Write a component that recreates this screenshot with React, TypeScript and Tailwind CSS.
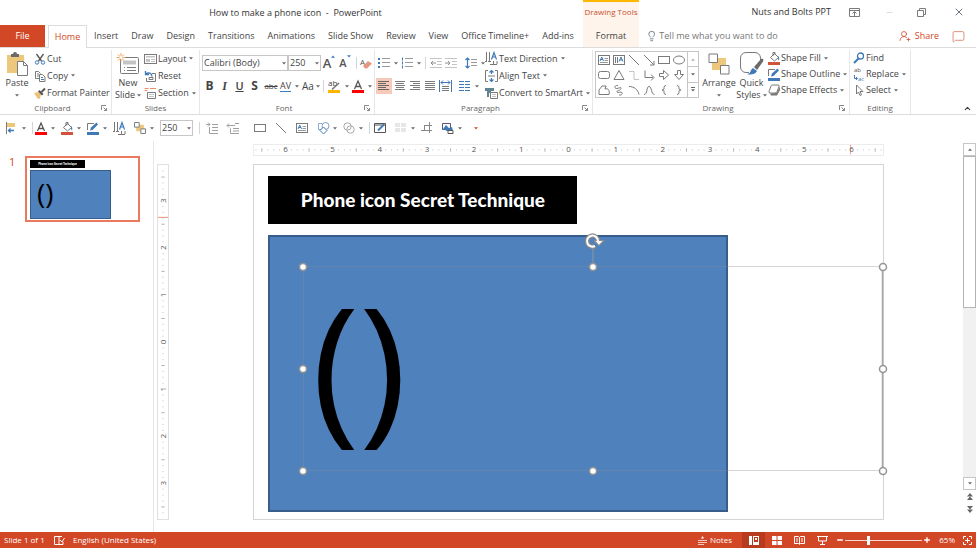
import type { ReactNode } from "react";
import { ChevronUp, Lightbulb, MessageSquare, Minus, Plus, UserRoundPlus, X } from "lucide-react";

const TABS = ["Insert", "Draw", "Design", "Transitions", "Animations", "Slide Show", "Review", "View", "Office Timeline+", "Add-ins"];

const GRAY = "#7a7a7a";
const BLUE = "#3f79b7";
const LIGHT = "#c4c4c4";

function Icon({ children, w = 12, h = 12 }: { children: ReactNode; w?: number; h?: number }) {
  return (
    <svg width={w} height={h} viewBox={`0 0 ${w} ${h}`} fill="none" stroke={GRAY} className="shrink-0 overflow-visible" aria-hidden="true">
      {children}
    </svg>
  );
}

function Caret({ color = "#666" }: { color?: string }) {
  return (
    <svg width="4" height="3" viewBox="0 0 4 3" className="shrink-0" aria-hidden="true">
      <path d="M0 .3h4L2 2.5z" fill={color} />
    </svg>
  );
}

/* ---------- icons ---------- */

const Lines = ({ rows, color = GRAY }: { rows: [number, number][]; color?: string }) => (
  <Icon>
    {rows.map(([a, b], i) => (
      <path key={i} d={`M${a} ${1.5 + i * 2}H${b}`} stroke={color} />
    ))}
  </Icon>
);

const PasteIcon = () => (
  <Icon w={22} h={24}>
    <path d="M1 3h17v18H1z" fill="#edc77c" stroke="none" />
    <path d="M5 5V2h2a2 2 0 0 1 4 0h2v3z" fill="#6a6a6a" stroke="none" />
    <path d="M11.500 9.500h6l4 4v10h-10z" fill="#fff" />
    <path d="M17.500 9.500v4h4" />
  </Icon>
);

const CutIcon = () => (
  <Icon>
    <path d="M2.500 1l5 7M9.500 1l-5 7" stroke="#555" strokeWidth="1.300" />
    <circle cx="3" cy="9.500" r="1.700" stroke={BLUE} />
    <circle cx="9" cy="9.500" r="1.700" stroke={BLUE} />
  </Icon>
);

const CopyIcon = () => (
  <Icon>
    <path d="M5 8.500H1.500v-7h3l2 2M3 4h2M3 6h2" />
    <path d="M5.500 4.500h3l2.500 2.500v4.500H5.500z" fill="#fff" />
    <path d="M7 7.500h2M7 9.500h3" stroke={BLUE} />
  </Icon>
);

const PainterIcon = () => (
  <Icon>
    <path d="M0 6l4.500-1 2.500 2-1 4.500-2 .5z" fill="#edc077" stroke="none" />
    <path d="M4 4.500l4 4 1.500-1.500-4-4z" fill="#555" stroke="none" />
    <path d="M7.500 5l3.500-3.500" stroke="#555" strokeWidth="2" />
  </Icon>
);

const NewSlideIcon = () => (
  <Icon w={24} h={22}>
    <rect x="4.500" y="4.500" width="18" height="16" rx="1" fill="#fff" />
    <path d="M7 7.500h13v4H7z" fill={LIGHT} stroke="none" />
    <path d="M8 14.500h1M11 14.500h9M8 17.500h1M11 17.500h9" />
    <path d="M5 0v9M.5 4.500h9M2 1.500l6 6M8 1.500l-6 6" stroke="#eda45f" />
    <circle cx="5" cy="4.500" r="1.500" fill="#fff" stroke="none" />
  </Icon>
);

const LayoutIcon = () => (
  <Icon w={13}>
    <rect x=".5" y="1.500" width="12" height="9" />
    <path d="M2 3h9v1.500H2zM2 6h4v3H2z" fill={LIGHT} stroke="none" />
    <path d="M7 6.500h4M7 8.500h4" stroke={LIGHT} />
  </Icon>
);

const ResetIcon = () => (
  <Icon w={13}>
    <path d="M8 3.500h3.500v8h-9V8M5 7.500h4v2H5z" />
    <path d="M1.500 1v3.500H5M2 4a3.500 3.500 0 0 1 6 2.500" stroke={BLUE} strokeWidth="1.300" />
  </Icon>
);

const SectionIcon = () => (
  <Icon w={13}>
    <path d="M.5 1.500h4M.5 3.500h3M6 1.500h6" stroke="#e8926c" />
    <path d="M3.500 5.500h8v6h-8z" />
    <path d="M5 7.500h5M5 9.500h5" stroke={LIGHT} />
  </Icon>
);

const EraserIcon = () => (
  <Icon>
    <text x="0" y="8" fontSize="8" fill="#555" stroke="none">A</text>
    <path d="M3 9l5-5 4 2.500-5 5H5z" fill="#e8987f" stroke="none" />
  </Icon>
);

const BulletsIcon = ({ numbered = false }: { numbered?: boolean }) => (
  <Icon>
    {[2, 6, 10].map((y) => (
      <g key={y}>
        {numbered ? (
          <path d={`M1.500 ${y - 1.500}v3`} stroke={BLUE} />
        ) : (
          <rect x="0" y={y - 1} width="2" height="2" fill={BLUE} stroke="none" />
        )}
        <path d={`M4 ${y - 0.5}h8`} stroke="#9a9a9a" />
      </g>
    ))}
  </Icon>
);

const IndentIcon = ({ out = false }: { out?: boolean }) => (
  <Icon>
    <path d="M0 1.500h12M7 4.500h5M7 7.500h5M0 10.500h12" stroke={LIGHT} />
    <path d={out ? "M6 6H1M3 4L1 6l2 2" : "M0 6h5M3 4l2 2-2 2"} stroke="#8e8e8e" />
  </Icon>
);

const SpacingIcon = () => (
  <Icon>
    <path d="M2.500 1v10M.5 3l2-2 2 2M.5 9l2 2 2-2" stroke={BLUE} strokeWidth="1.200" />
    <path d="M6 2.500h6M6 5.500h6M6 8.500h6" stroke="#9a9a9a" />
  </Icon>
);

const DistributeIcon = () => (
  <Icon w={13}>
    <path d="M.5 0v12M12.500 0v12M2 2.500h9M4 .5l-2 2 2 2M9 .5l2 2-2 2" stroke={BLUE} />
    <path d="M3 6.500h7M3 8.500h7M3 10.500h7" />
  </Icon>
);

const ColumnsIcon = () => (
  <Icon>
    <path d="M0 1.500h5M6 1.500h5M0 4.500h5M6 4.500h5M0 7.500h5M6 7.500h5M0 10.500h5M6 10.500h5" stroke={BLUE} />
  </Icon>
);

const TextDirIcon = () => (
  <Icon w={13} h={13}>
    <path d="M1.500 0v10M4.500 0v10M0 9.500h2M3 9.500h3M8.500 9v3M12 9v3M5 12.500h7" stroke="#777" />
    <path d="M6.500 7.500l2.500-7L11.500 7.500M7.500 5h3" stroke={BLUE} strokeWidth="1.200" />
  </Icon>
);

const AlignTextIcon = () => (
  <Icon w={13}>
    <path d="M3 .5H.5v11H3M10 .5h2.500v11H10M3 6h7" />
    <path d="M6.500 1v3M6.500 8v3M4.500 2.500l2-2 2 2M4.500 9.500l2 2 2-2" stroke={BLUE} strokeWidth="1.200" />
  </Icon>
);

const SmartArtIcon = () => (
  <Icon w={13}>
    <path d="M0 1h9v3H6v2H4v4H2V4H0z" fill="#5f8390" stroke="none" />
    <path d="M5.500 5.500h7v6h-7z" fill="#fff" />
    <path d="M7 7.500h4M7 9.500h4" stroke={LIGHT} />
  </Icon>
);

const ArrangeIcon = ({ small = false }: { small?: boolean }) => (
  <svg
    width={small ? 12 : 22}
    height={small ? 12 : 22}
    viewBox="0 0 22 22"
    fill="#fff"
    stroke={GRAY}
    strokeWidth={small ? 1.8 : 1}
    aria-hidden="true"
  >
    <path d="M9 5h9v8H9zM4 10h8v7H4z" fill="#edc77c" stroke="none" />
    <path d="M1 1h8.500v8.500H1zM12.500 12.500H21V21h-8.500z" />
  </svg>
);

const QuickStylesIcon = () => (
  <Icon w={24} h={24}>
    <path d="M9 20.500H6a5.500 5.500 0 0 1-5.500-5.500V6A5.500 5.500 0 0 1 6 .5h9A5.500 5.500 0 0 1 20.500 6v2" fill="#fff" />
    <path d="M14 15l7-8c3-1 2.500 1 2 2.500L17 18z" fill="#6a6a6a" stroke="none" />
    <path d="M7 22c4 0 3-4 6-6l4 3c-2 4-7 4-10 3z" fill={BLUE} stroke="none" />
  </Icon>
);

const FillIcon = () => (
  <Icon w={12} h={13}>
    <path d="M2.500 5.500l4-4 4 4-4 3.500zM5 4V.5h2V3" stroke="#777" />
    <path d="M10 4c1.500 1 1.500 3 1 4.500-1-.5-1-2-1-4.500z" fill={BLUE} stroke="none" />
    <path d="M0 10h12v3H0z" fill="#d0533a" stroke="none" />
  </Icon>
);

const OutlineIcon = () => (
  <Icon w={12} h={13}>
    <path d="M7 1.500H.5V8" />
    <path d="M3 8.500l1-3 5.500-5 1.500 2L5.500 8z" fill={BLUE} stroke="none" />
    <path d="M0 10h12v3H0z" fill={BLUE} stroke="none" />
  </Icon>
);

const EffectsIcon = () => (
  <Icon w={12} h={12}>
    <path d="M2 9.500l1 2h6l3-5.500V2.500L8.500 9z" fill="#777" stroke="none" />
    <path d="M4.500 1h5.500q1.500 0 1 1.500L9 7.500Q8.500 9 7 9H2Q.5 9 1 7.500L3 2q.3-1 1.500-1z" fill="#fff" />
  </Icon>
);

const FindIcon = () => (
  <Icon>
    <circle cx="7.500" cy="4" r="3" stroke={BLUE} strokeWidth="1.300" />
    <path d="M5.500 6.500L1 11" stroke={BLUE} strokeWidth="2" />
  </Icon>
);

const ReplaceIcon = () => (
  <Icon>
    <text x="1" y="4" fontSize="6" fill="#555" stroke="none">ab</text>
    <text x="5" y="13" fontSize="6" fill={BLUE} stroke="none">ac</text>
    <path d="M1.500 7v3.500H4M3 9l1.500 1.500L3 12" stroke={BLUE} />
  </Icon>
);

const SelectIcon = () => (
  <Icon>
    <path d="M3.500 1v9l2-2 1.500 3.500 1.500-.7L7 7.500h3z" />
  </Icon>
);

const FontColorIcon = ({ color = "#f00" }: { color?: string }) => (
  <Icon w={12} h={13}>
    <path d="M2.500 9L6 1l3.500 8M4 6.500h4" stroke="#555" strokeWidth="1.300" />
    <path d="M0 10h12v3H0z" fill={color} stroke="none" />
  </Icon>
);

const HighlightIcon = () => (
  <Icon w={13} h={13}>
    <text x="0" y="6" fontSize="8" fill="#444" stroke="none">ab</text>
    <path d="M4 9.500l7-6.500" stroke="#777" strokeWidth="1.600" />
    <path d="M0 10h12v3H0z" fill="#ffb400" stroke="none" />
  </Icon>
);

const RectIcon = () => (
  <Icon>
    <rect x=".5" y="2.500" width="11" height="7" />
  </Icon>
);

const LineIcon = ({ arrow = false }: { arrow?: boolean }) => (
  <Icon>
    <path d="M1 1l10 10" />
    {arrow && <path d="M11 7v4H7" />}
  </Icon>
);

const TextBoxIcon = ({ vertical = false }: { vertical?: boolean }) => (
  <Icon>
    <rect x=".5" y="1.500" width="11" height="9" />
    {vertical ? <path d="M2.500 3v6M4.500 3v6" /> : <path d="M6.500 4.500H10M6.500 6.500H10M2 8.500h8" stroke="#999" />}
    <path d={vertical ? "M6 7.500L8 3l2 4.500M7 6h2" : "M2 7l1.700-4L5.500 7M3 5.500h2"} stroke={BLUE} />
  </Icon>
);

const GALLERY: { name: string; icon: ReactNode }[] = [
  { name: "Text box", icon: <TextBoxIcon /> },
  { name: "Vertical text box", icon: <TextBoxIcon vertical /> },
  { name: "Line", icon: <LineIcon /> },
  { name: "Arrow", icon: <LineIcon arrow /> },
  { name: "Rectangle", icon: <RectIcon /> },
  { name: "Oval", icon: <Icon><ellipse cx="6" cy="6" rx="5.500" ry="4" /></Icon> },
  { name: "Rounded rectangle", icon: <Icon><rect x=".5" y="2.500" width="11" height="7" rx="2" /></Icon> },
  { name: "Triangle", icon: <Icon><path d="M6 1.500L11 10.500H1z" /></Icon> },
  { name: "Elbow", icon: <Icon><path d="M1 2.500h5v8h5" stroke={LIGHT} /></Icon> },
  { name: "Elbow arrow", icon: <Icon><path d="M2 1.500v7h8M8 5.500l3 3-3 3" /></Icon> },
  { name: "Right arrow", icon: <Icon><path d="M1.500 4.500h4v-3L10.500 6l-5 4.500v-3h-4z" /></Icon> },
  { name: "Down arrow", icon: <Icon><path d="M4.500 1.500h3v4h3L6 10.500 1.500 5.500h3z" /></Icon> },
  { name: "Freeform", icon: <Icon><path d="M1 10.500V6l3-4h4L7 5c3-1 5 1 4 5.500z" /></Icon> },
  { name: "Scribble", icon: <Icon><path d="M5 1.500C1 1 1 5 4 4.500s4-2 4 0-5 2-4 3.500 4-1 5 .5-1 3-3 2.500" /></Icon> },
  { name: "Arc", icon: <Icon><path d="M1 2.500c5 0 9 3 10 8" /></Icon> },
  { name: "Curve", icon: <Icon><path d="M1 10.500c4 0 2-8 5-8s2 8 5.500 8" /></Icon> },
  { name: "Left brace", icon: <Icon><path d="M8 1.500q-2 0-2 2V5q0 1-2 1 2 0 2 1v1.500q0 2 2 2" /></Icon> },
  { name: "Right brace", icon: <Icon><path d="M4 1.500q2 0 2 2V5q0 1 2 1-2 0-2 1v1.500q0 2-2 2" /></Icon> },
];

/* ---------- ribbon pieces ---------- */

function Tool({ label, icon, caret = false, className = "" }: { label: string; icon: ReactNode; caret?: boolean; className?: string }) {
  return (
    <button aria-label={label} className={`flex h-4 shrink-0 items-center gap-1 ${className}`}>
      {icon}
      {caret && <Caret />}
    </button>
  );
}

function Command({ label, icon, caret = false }: { label: string; icon: ReactNode; caret?: boolean }) {
  return (
    <button className="flex min-h-4 flex-1 items-center gap-px whitespace-nowrap">
      {icon}
      <span>{label}</span>
      {caret && (
        <span className="pl-[2px]">
          <Caret />
        </span>
      )}
    </button>
  );
}

function BigCommand({ lines, icon, className }: { lines: [string, string?]; icon: ReactNode; className: string }) {
  return (
    <button className={`flex shrink-0 flex-col items-center ${className}`}>
      <span className="flex h-[27px] items-center">{icon}</span>
      <span className="leading-3">{lines[0]}</span>
      <span className="flex h-3 items-center gap-[2px] leading-3">
        {lines[1]}
        <Caret />
      </span>
    </button>
  );
}

function Launcher() {
  return (
    <svg width="6" height="6" viewBox="0 0 6 6" fill="none" stroke="#888" aria-hidden="true">
      <path d="M.5 5V.5H5M2.500 2.500l3 3M5.500 3v2.500H3" />
    </svg>
  );
}

function Group({ title, launcher = false, className, children }: { title: string; launcher?: boolean; className: string; children: ReactNode }) {
  return (
    <section className={`flex shrink-0 flex-col border-r border-gray-200 ${className}`}>
      <div className="flex h-[52px]">{children}</div>
      <div className="flex h-3 items-center px-1 text-[8px] text-[#666]">
        <h2 className="flex-1 text-center leading-3">{title}</h2>
        {launcher && (
          <button aria-label={`${title} settings`}>
            <Launcher />
          </button>
        )}
      </div>
    </section>
  );
}

function Combo({ label, value, className }: { label: string; value: string; className: string }) {
  return (
    <span className={`relative flex h-4 shrink-0 items-center border border-[#c6c6c6] ${className}`}>
      <select aria-label={label} className="w-full appearance-none bg-transparent px-px leading-3 text-[#444] outline-none">
        <option>{value}</option>
      </select>
      <span className="pointer-events-none absolute right-px">
        <Caret />
      </span>
    </span>
  );
}

const Divider = ({ className = "mx-1" }: { className?: string }) => <span className={`h-3 w-px shrink-0 bg-gray-300 ${className}`} />;

function TitleBar() {
  return (
    <div className="flex h-[25px]">
      <div className="flex w-[583px] items-center justify-center pl-2 whitespace-pre text-[#333]">How to make a phone icon  -  PowerPoint</div>
      <div className="flex w-14 items-center justify-center border-t-2 border-[#ffb700] bg-[#fef4ec] pb-1 whitespace-nowrap text-[#c8502c]">
        <span className="text-[8px]">Drawing Tools</span>
      </div>
      <div className="flex flex-1 items-center justify-end pr-[11px] pb-px">
        <span className="pr-[18px] text-[#333]">Nuts and Bolts PPT</span>
        <button aria-label="Ribbon display options" className="w-9">
          <Icon w={11} h={9}>
            <path d="M.5.5h10v8H.5zM.5 2.500h10M5.500 8V4M3.500 5.500l2-2 2 2" />
          </Icon>
        </button>
        <button aria-label="Minimize" className="w-8 text-gray-300">
          <Minus size={9} strokeWidth={2} />
        </button>
        <button aria-label="Restore" className="w-9">
          <Icon w={9} h={9}>
            <path d="M.5 2.500h6v6h-6zM2.500 2V.5h6v6H7" />
          </Icon>
        </button>
        <button aria-label="Close" className="text-gray-500">
          <X size={12} strokeWidth={2} />
        </button>
      </div>
    </div>
  );
}

function TabRow() {
  return (
    <nav className="flex h-[23px] items-stretch border-b border-[#dcdcdc]">
      <button className="w-[45px] bg-[#d24726] text-white">File</button>
      <button className="-mb-px ml-[3px] w-[39px] border border-b-0 border-[#dcdcdc] bg-white text-[#d24726]">Home</button>
      <div className="flex w-[496px] items-center justify-between pr-[9px] pl-[7px]">
        {TABS.map((tab) => (
          <button key={tab} className="whitespace-nowrap">
            {tab}
          </button>
        ))}
      </div>
      <button className="w-14 bg-[#fef4ec]">Format</button>
      <label className="flex flex-1 items-center gap-[2px] pl-[7px]">
        <Lightbulb size={12} strokeWidth={1.5} className="text-gray-600" />
        <input aria-label="Tell me" placeholder="Tell me what you want to do" className="w-full outline-none placeholder:text-[#777]" />
      </label>
      <button className="flex items-center gap-1 text-[#d24726]">
        <UserRoundPlus size={12} strokeWidth={1.5} />
        Share
      </button>
      <button aria-label="Comments" className="pr-[11px] pl-[13px] text-[#d97a5f]">
        <MessageSquare size={13} strokeWidth={1.5} />
      </button>
    </nav>
  );
}

function Ribbon() {
  return (
    <div className="flex h-[67px] border-b border-[#dcdcdc] pt-[2px]">
      <Group title="Clipboard" launcher className="w-28">
        <BigCommand lines={["Paste"]} icon={<PasteIcon />} className="w-[34px]" />
        <div className="flex flex-col">
          <Command label="Cut" icon={<CutIcon />} />
          <Command label="Copy" icon={<CopyIcon />} caret />
          <Command label="Format Painter" icon={<PainterIcon />} />
        </div>
      </Group>

      <Group title="Slides" className="w-[88px]">
        <BigCommand lines={["New", "Slide"]} icon={<NewSlideIcon />} className="w-8" />
        <div className="flex flex-col">
          <Command label="Layout" icon={<LayoutIcon />} caret />
          <Command label="Reset" icon={<ResetIcon />} />
          <Command label="Section" icon={<SectionIcon />} caret />
        </div>
      </Group>

      <Group title="Font" launcher className="w-[175px]">
        <div className="flex flex-col gap-[7px] pt-[5px] pl-[2px]">
          <div className="flex items-center">
            <Combo label="Font" value="Calibri (Body)" className="w-[86px]" />
            <Combo label="Font size" value="250" className="w-[33px]" />
            <button aria-label="Increase font size" className="flex w-4 justify-center text-[13px] leading-4 font-semibold text-[#555]">
              A
              <span className="h-[3px] rotate-180">
                <Caret color={BLUE} />
              </span>
            </button>
            <button aria-label="Decrease font size" className="flex w-4 justify-center text-[11px] leading-4 font-semibold text-[#555]">
              A
              <Caret color={BLUE} />
            </button>
            <Divider className="mx-[3px]" />
            <Tool label="Clear formatting" icon={<EraserIcon />} />
          </div>
          <div className="flex items-center">
            <button className="w-[15px] text-xs leading-4 font-bold">B</button>
            <button className="w-[15px] font-['Liberation_Serif',serif] text-xs leading-4 font-bold italic">I</button>
            <button className="w-[15px] text-[11px] leading-4 font-semibold underline">U</button>
            <button className="w-[15px] text-xs leading-4 font-bold">S</button>
            <button className="w-[18px] text-[8px] leading-4 line-through">abc</button>
            <button aria-label="Character spacing" className="flex w-[22px] items-center gap-1">
              <span className="border-b border-[#3f79b7] leading-[10px]">AV</span>
              <Caret />
            </button>
            <button aria-label="Change case" className="flex w-[21px] items-center gap-[2px] text-[10px] leading-4">
              Aa
              <Caret />
            </button>
            <Divider className="mr-1" />
            <Tool label="Highlight" icon={<HighlightIcon />} caret className="w-6" />
            <Tool label="Font color" icon={<FontColorIcon />} caret />
          </div>
        </div>
      </Group>

      <Group title="Paragraph" launcher className="w-[218px]">
        <div className="flex w-[110px] flex-col gap-[7px] pt-[5px] pl-px">
          <div className="flex items-center pl-[2px]">
            <Tool label="Bullets" icon={<BulletsIcon />} caret className="w-[23px]" />
            <Tool label="Numbering" icon={<BulletsIcon numbered />} caret className="w-6" />
            <Divider className="mr-1" />
            <Tool label="Decrease indent" icon={<IndentIcon out />} className="w-[15px]" />
            <Tool label="Increase indent" icon={<IndentIcon />} className="w-5" />
            <Tool label="Line spacing" icon={<SpacingIcon />} caret />
          </div>
          <div className="flex items-center">
            <Tool label="Align left" icon={<Lines rows={[[0, 11], [0, 8], [0, 11], [0, 8], [0, 11]]} color="#666" />} className="w-4 justify-center bg-[#f6c9b8]" />
            <Tool label="Center" icon={<Lines rows={[[1, 11], [2, 10], [1, 11], [2, 10], [1, 11]]} />} className="w-[15px] justify-center" />
            <Tool label="Align right" icon={<Lines rows={[[1, 11], [4, 11], [1, 11], [4, 11], [1, 11]]} />} className="w-[15px] justify-center" />
            <Tool label="Justify" icon={<Lines rows={[[1, 11], [1, 11], [1, 11], [1, 11], [1, 11]]} />} className="w-[15px] justify-center" />
            <Tool label="Distribute" icon={<DistributeIcon />} className="w-[22px] pl-[2px]" />
            <Tool label="Columns" icon={<ColumnsIcon />} caret />
          </div>
        </div>
        <div className="flex flex-col">
          <Command label="Text Direction" icon={<TextDirIcon />} caret />
          <Command label="Align Text" icon={<AlignTextIcon />} caret />
          <Command label="Convert to SmartArt" icon={<SmartArtIcon />} caret />
        </div>
      </Group>

      <Group title="Drawing" launcher className="w-[257px]">
        <div className="mt-px mr-1 ml-[2px] flex h-[47px] w-[104px] shrink-0 border border-[#c6c6c6]">
          <div className="grid flex-1 grid-cols-6 place-items-center">
            {GALLERY.map(({ name, icon }) => (
              <button key={name} aria-label={name}>
                {icon}
              </button>
            ))}
          </div>
          <div className="flex w-[11px] flex-col divide-y divide-[#c6c6c6] border-l border-[#c6c6c6]">
            {["Scroll shapes up", "Scroll shapes down", "More shapes"].map((name, i) => (
              <button key={name} aria-label={name} className="flex flex-1 items-center justify-center">
                <span className={i === 0 ? "rotate-180 opacity-50" : i === 2 ? "border-t border-[#666] pt-px" : ""}>
                  <Caret />
                </span>
              </button>
            ))}
          </div>
        </div>
        <BigCommand lines={["Arrange"]} icon={<ArrangeIcon />} className="w-8" />
        <BigCommand lines={["Quick", "Styles"]} icon={<QuickStylesIcon />} className="w-[33px]" />
        <div className="flex flex-col pb-1">
          <Command label="Shape Fill" icon={<FillIcon />} caret />
          <Command label="Shape Outline" icon={<OutlineIcon />} caret />
          <Command label="Shape Effects" icon={<EffectsIcon />} caret />
        </div>
      </Group>

      <Group title="Editing" className="w-[61px]">
        <div className="flex flex-col pb-1 pl-[3px]">
          <Command label="Find" icon={<FindIcon />} />
          <Command label="Replace" icon={<ReplaceIcon />} caret />
          <Command label="Select" icon={<SelectIcon />} caret />
        </div>
      </Group>

      <div className="flex flex-1 items-end justify-end pr-1 pb-px">
        <button aria-label="Collapse ribbon">
          <ChevronUp size={9} strokeWidth={3} />
        </button>
      </div>
    </div>
  );
}

function QuickBar() {
  const split = "w-[26px]";
  const plain = "w-[21px]";
  return (
    <div className="flex h-[26px] items-center pl-[6px]">
      <Tool label="Align" caret className={split} icon={
        <Icon>
          <path d="M.5 0v12" />
          <path d="M1 1h8v4H1z" fill="#edc77c" stroke="none" />
          <path d="M2 8.500h6M4.500 6.500l-2 2 2 2" stroke={BLUE} strokeWidth="1.300" />
        </Icon>
      } />
      <Divider className="mr-[2px]" />
      <Tool label="Font color" icon={<FontColorIcon />} caret className={split} />
      <Tool label="Shape fill" icon={<FillIcon />} caret className={split} />
      <Tool label="Shape outline" icon={<OutlineIcon />} caret className={split} />
      <Tool label="Text direction" icon={<TextDirIcon />} className={plain} />
      <Tool label="Arrange" icon={<ArrangeIcon small />} caret className={split} />
      <Combo label="Size" value="250" className="w-[33px]" />
      <Divider className="mx-[6px]" />
      <Tool label="Bring forward" className={plain} icon={
        <Icon>
          <path d="M0 2.500h4M2 .5l2 2-2 2M6 2.500h6M3.500 5v6.500H12M6 5.500h6M6 8.500h6" stroke="#a0a0a0" />
        </Icon>
      } />
      <Tool label="Send backward" className="w-[27px]" icon={
        <Icon>
          <path d="M0 3.500h8M2 1.500l-2 2 2 2M8 1.500h4M6 6.500h6M3.500 6.500v5H12M6 9h6" stroke="#a0a0a0" />
        </Icon>
      } />
      <Tool label="Rectangle" icon={<RectIcon />} className={plain} />
      <Tool label="Line" icon={<LineIcon />} className={plain} />
      <Tool label="Text box" icon={<TextBoxIcon />} className={plain} />
      <Tool label="Shapes" caret className={split} icon={
        <Icon>
          <path d="M5 1.500H1.500v6H4" stroke="#8aa9cc" />
          <circle cx="8.500" cy="4" r="3.500" stroke="#7f9fc6" />
          <path d="M6.500 5L10 8.500 6.500 12 3 8.500z" fill="#fff" stroke={BLUE} />
        </Icon>
      } />
      <Tool label="Merge shapes" caret className={split} icon={
        <Icon>
          <circle cx="4.500" cy="4.500" r="3.700" stroke="#aaa" />
          <circle cx="7.500" cy="7.500" r="3.700" stroke="#aaa" />
        </Icon>
      } />
      <Divider className="mr-1" />
      <Tool label="Edit points" className={plain} icon={
        <Icon>
          <path d="M.5 1.500h11v9H.5zM.5 3h11" stroke="#555" />
          <path d="M4 8.500l6-6" stroke={BLUE} strokeWidth="1.800" />
        </Icon>
      } />
      <Tool label="Table" caret className={split} icon={
        <Icon>
          <path d="M0 1h5v4H0zM6 1h5v4H6zM0 6h5v4H0zM6 6h5v4H6z" fill="#e6e6e6" stroke="none" />
        </Icon>
      } />
      <Tool label="Crop" className={plain} icon={
        <Icon w={11}>
          <path d="M3 3.500h5.500V11M0 8.500h11M8.500 3V0M3.500 3.500V9M8 3.500h3" stroke="#888" />
        </Icon>
      } />
      <Tool label="Picture" caret className="w-8" icon={
        <Icon>
          <path d="M.5 1.500h8v6h-8z" stroke="#557" />
          <path d="M1 7l3-4 3 3 3-1 1 4H5z" fill={BLUE} stroke="none" />
          <path d="M6 8.500h5v3H6z" fill="#fff" stroke="#555" />
        </Icon>
      } />
      <button aria-label="Customize">
        <Caret color="#d24726" />
      </button>
    </div>
  );
}

/* ---------- rulers ---------- */

const INCH = 47.25;
const EIGHTHS = [1, 2, 3, 4, 5, 6, 7];

function Ruler({ vertical = false }: { vertical?: boolean }) {
  const length = vertical ? 355 : 630;
  const reach = vertical ? 3 : 6;
  const mid = length / 2;
  const marks = Array.from({ length: reach * 2 + 1 }, (_, i) => i - reach);
  const gaps = Array.from({ length: reach * 2 + 2 }, (_, i) => i - reach - 1);
  const ticks = gaps.flatMap((g) => EIGHTHS.map((e) => ({ at: mid + (g + e / 8) * INCH, half: e === 4 })));
  return (
    <svg
      viewBox={vertical ? "0 0 12 355" : "0 0 630 12"}
      preserveAspectRatio="none"
      className={vertical ? "h-full w-3 shrink-0 border border-[#e0e0e0]" : "h-3 w-full border border-[#ececec]"}
      aria-hidden="true"
    >
      {ticks
        .filter((t) => t.at > 1 && t.at < length - 1)
        .map((t) =>
          vertical ? (
            <path key={t.at} d={`M${t.half ? 4 : 5.5} ${t.at}h${t.half ? 4 : 1}`} stroke="#aaa" />
          ) : (
            <path key={t.at} d={`M${t.at} ${t.half ? 4 : 5.5}v${t.half ? 4 : 1}`} stroke="#aaa" />
          ),
        )}
      {marks.map((m) => {
        const at = mid + m * INCH;
        return vertical ? (
          <text key={m} transform={`translate(9 ${at}) rotate(-90)`} textAnchor="middle" fontSize="8" fill="#555">
            {Math.abs(m)}
          </text>
        ) : (
          <text key={m} x={at} y="9" textAnchor="middle" fontSize="8" fill="#555">
            {Math.abs(m)}
          </text>
        );
      })}
      {vertical ? <path d="M0 52.500h12" stroke="#e8896c" /> : <path d="M597.500 0v12" stroke="#e0553a" strokeDasharray="1 1" />}
    </svg>
  );
}

/* ---------- slide ---------- */

const HANDLES: [number, number][] = [
  [50, 103], [340, 103], [630, 103],
  [50, 205], [630, 205],
  [50, 307], [340, 307], [630, 307],
];

function Selection() {
  return (
    <svg
      viewBox="0 0 631 356"
      className="absolute -inset-px h-[calc(100%+2px)] w-[calc(100%+2px)] overflow-visible"
      fill="none"
      aria-hidden="true"
    >
      <path d="M50 102.500H630M50 306.500H630M50.500 103v204" stroke="#8a8a8a" strokeOpacity=".35" />
      <path d="M629.500 103v204" stroke="#a6a6a6" strokeWidth="1.500" />
      <path d="M340 81v18" stroke="#8a9a9a" />
      {HANDLES.map(([x, y]) => (
        <circle key={`${x}-${y}`} cx={x} cy={y} r="3.500" fill="#fff" stroke="#949494" strokeWidth="1.500" />
      ))}
      <path d="M345 77a5.500 5.500 0 1 0-3 5" stroke="#8c8c8c" strokeWidth="4.500" />
      <path d="M340 76h12l-6 6.500z" fill="#8c8c8c" />
      <path d="M345 77a5.500 5.500 0 1 0-3 5" stroke="#fff" strokeWidth="2" />
      <path d="M342.500 77h7l-3.500 3.700z" fill="#fff" />
    </svg>
  );
}

function Slide() {
  return (
    <div className="relative aspect-[631/356] flex-1 border border-[#d4d4d4] bg-white">
      <div className="absolute top-[3.100%] left-[2.300%] flex h-[13.700%] w-[49.100%] items-center justify-center bg-black font-['Lato'] text-[19px] font-black whitespace-nowrap text-white">
        Phone icon Secret Technique
      </div>
      <div className="absolute top-[19.900%] left-[2.300%] h-[78%] w-[73%] border-2 border-[#385d8a] bg-[#4f81bd]" />
      <div className="absolute top-[29%] left-[7.900%] flex h-[53%] w-[92%] items-center pl-2 font-['Open_Sans'] text-[161px] leading-none text-black">()</div>
      <Selection />
    </div>
  );
}

function Thumbnails() {
  return (
    <aside className="flex w-[154px] shrink-0 items-start border-r border-gray-200 pt-[15px] pl-[9px]">
      <span className="w-4 text-[11px] leading-3 text-[#d24726]">1</span>
      <button aria-label="Slide 1" className="relative h-[66px] w-[115px] border-2 border-[#ea7a5d] bg-white">
        <span className="absolute top-[2px] left-[3px] flex h-2 w-[55px] items-center justify-center bg-black font-['Lato'] text-[3px] font-black whitespace-nowrap text-white">
          Phone icon Secret Technique
        </span>
        <span className="absolute top-3 left-[3px] flex h-[49px] w-[81px] items-center border border-[#385d8a] bg-[#4f81bd] pb-1 pl-[6px] font-['Open_Sans'] text-[28px] leading-none text-black">
          ()
        </span>
      </button>
    </aside>
  );
}

function ScrollBar() {
  return (
    <div className="flex w-[13px] shrink-0 flex-col items-center pt-[2px] pb-4">
      <button aria-label="Scroll up" className="flex h-[13px] w-full items-center justify-center border border-[#c6c6c6]">
        <span className="rotate-180">
          <Caret />
        </span>
      </button>
      <div className="w-full flex-1 bg-[#f1f1f1]">
        <div className="h-[47.500%] w-full border border-[#b4b4b4] bg-white" />
      </div>
      <button aria-label="Scroll down" className="flex h-[13px] w-full items-center justify-center border border-[#c6c6c6]">
        <Caret />
      </button>
      <button aria-label="Previous slide" className="flex h-[13px] items-center">
        <Icon w={6} h={7}>
          <path d="M0 3.500L3 0l3 3.500zM0 7l3-3.500L6 7z" fill="#666" stroke="none" />
        </Icon>
      </button>
      <button aria-label="Next slide" className="flex h-[13px] items-center">
        <Icon w={6} h={7}>
          <path d="M0 3.500L3 7l3-3.500zM0 0l3 3.500L6 0z" fill="#666" stroke="none" />
        </Icon>
      </button>
    </div>
  );
}

function StatusBar() {
  return (
    <footer className="flex h-4 shrink-0 items-center bg-[#d24726] pr-1 pl-1 text-[8px] whitespace-nowrap text-white">
      <span className="w-[50px]">Slide 1 of 1</span>
      <button aria-label="Spelling" className="w-[19px]">
        <svg width="11" height="9" viewBox="0 0 11 9" fill="none" stroke="#fff" aria-hidden="true">
          <path d="M5 8.500H.5v-8H5zM5 8.500h4V6M5 .5h3M6 4l2 2 2.500-4" />
        </svg>
      </button>
      <span className="flex-1">English (United States)</span>
      <button className="flex items-center gap-[3px] pr-[10px]">
        <svg width="9" height="9" viewBox="0 0 9 9" fill="none" stroke="#fff" aria-hidden="true">
          <path d="M0 4.500h9M0 6.500h9M0 8.500h6" strokeOpacity=".7" />
          <path d="M3 2.500h3L4.500 0z" fill="#fff" stroke="none" />
        </svg>
        Notes
      </button>
      <button aria-label="Normal view" className="flex h-4 w-[23px] items-center justify-center bg-[#b83b1d]">
        <svg width="10" height="9" viewBox="0 0 10 9" fill="#fff" aria-hidden="true">
          <path d="M0 0h3v9H0zM4 0h6v9H4zm1 1v5h4V1zm1 1h2v2H6z" fillRule="evenodd" />
        </svg>
      </button>
      <button aria-label="Slide sorter" className="flex w-[23px] justify-center">
        <svg width="10" height="9" viewBox="0 0 10 9" fill="#fff" aria-hidden="true">
          <path d="M0 0h4.500v4H0zM5.500 0H10v4H5.500zM0 5h4.500v4H0zM5.500 5H10v4H5.500z" />
        </svg>
      </button>
      <button aria-label="Reading view" className="flex w-[23px] justify-center">
        <svg width="11" height="9" viewBox="0 0 11 9" fill="none" stroke="#fff" aria-hidden="true">
          <path d="M.5.5h4l1 1 1-1h4v7h-4l-1 1-1-1h-4zM5.500 1v7M2 3h2M2 5h2M7 3h2M7 5h2" />
        </svg>
      </button>
      <button aria-label="Slide show" className="mr-[2px] flex w-[23px] justify-center">
        <svg width="11" height="9" viewBox="0 0 11 9" fill="none" stroke="#fff" aria-hidden="true">
          <path d="M0 .5h11M1.500 1v4h8V1M5.500 5v3.500M3 8.500h5" />
        </svg>
      </button>
      <button aria-label="Zoom out">
        <Minus size={8} strokeWidth={4} />
      </button>
      <input
        aria-label="Zoom"
        type="range"
        min="0"
        max="100"
        defaultValue="30"
        className="mx-px h-3 w-[77px] appearance-none bg-transparent [&::-webkit-slider-runnable-track]:h-px [&::-webkit-slider-runnable-track]:bg-white/80 [&::-webkit-slider-thumb]:-mt-1 [&::-webkit-slider-thumb]:h-[9px] [&::-webkit-slider-thumb]:w-[3px] [&::-webkit-slider-thumb]:appearance-none [&::-webkit-slider-thumb]:bg-white"
      />
      <button aria-label="Zoom in">
        <Plus size={8} strokeWidth={4} />
      </button>
      <span className="w-6 text-right">65%</span>
      <button aria-label="Fit slide" className="pl-2">
        <svg width="9" height="9" viewBox="0 0 9 9" fill="none" stroke="#fff" aria-hidden="true">
          <path d="M3 .5H.5V3M6 .5h2.500V3M3 8.500H.5V6M6 8.500h2.500V6M4.500 2v5M2 4.500h5" />
        </svg>
      </button>
    </footer>
  );
}

export default function App() {
  return (
    <div className="flex h-screen flex-col overflow-hidden bg-white font-['Open_Sans','Noto_Sans',sans-serif] text-[9px] leading-3 text-[#444]">
      <header className="shrink-0">
        <TitleBar />
        <TabRow />
        <Ribbon />
        <QuickBar />
      </header>
      <main className="flex min-h-0 flex-1">
        <Thumbnails />
        <div className="flex min-w-0 flex-1 flex-col gap-2 pt-[3px] pr-[79px] pl-[3px]">
          <div className="pl-24">
            <Ruler />
          </div>
          <div className="flex items-stretch gap-[84px]">
            <div className="relative w-3 shrink-0">
              <div className="absolute inset-0">
                <Ruler vertical />
              </div>
            </div>
            <Slide />
          </div>
        </div>
        <ScrollBar />
      </main>
      <StatusBar />
    </div>
  );
}
